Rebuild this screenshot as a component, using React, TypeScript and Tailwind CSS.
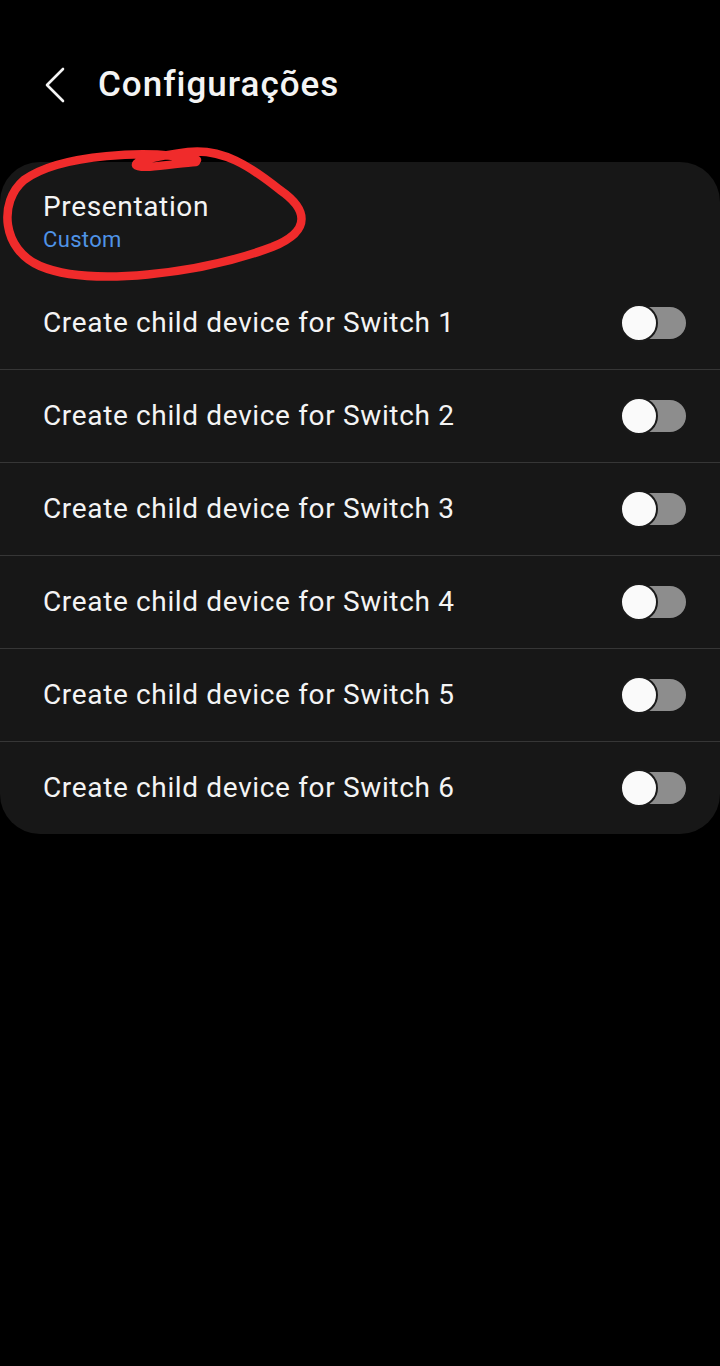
import React from "react";

function Toggle() {
  return (
    <div className="relative w-[66px] h-[38px] flex items-center">
      <div className="absolute left-[4px] right-0 h-[32px] rounded-full bg-[#8d8d8d]" />
      <div className="absolute left-0 w-[38px] h-[38px] rounded-full bg-[#fafafa] border-[2px] border-[#1a1a1a]" />
    </div>
  );
}

export default function App() {
  const rows = [1, 2, 3, 4, 5, 6];
  return (
    <div
      className="relative w-[720px] h-[1366px] bg-black text-[#f4f4f4] overflow-hidden"
      style={{ fontFamily: "Roboto, 'Noto Sans', sans-serif" }}
    >
      <div className="h-[162px] pt-[65px] flex items-start">
        <div className="flex items-center h-[40px]">
          <svg className="ml-[44px]" width="22" height="36" viewBox="0 0 22 36" fill="none">
            <path d="M19 2 L3 18 L19 34" stroke="#f4f4f4" strokeWidth="2.6" strokeLinecap="round" strokeLinejoin="round" />
          </svg>
          <span className="ml-[32px] text-[35px] leading-[40px] font-medium tracking-[1px]">Configurações</span>
        </div>
      </div>

      <div className="bg-[#171717] rounded-[40px]">
        <div className="h-[115px] pt-[28px] pl-[43px] flex flex-col">
          <span className="text-[28px] leading-[34px] tracking-[0.65px]">Presentation</span>
          <span className="mt-[3px] text-[22px] leading-[26px] tracking-[0.35px] text-[#4f93e6]">Custom</span>
        </div>
        {rows.map((n, i) => (
          <div
            key={n}
            className={
              "h-[92px] box-content flex items-center justify-between pl-[43px] pr-[34px] " +
              (i > 0 ? "border-t border-[#363636]" : "")
            }
          >
            <span className="text-[28px] leading-[34px] tracking-[0.65px]">Create child device for Switch {n}</span>
            <Toggle />
          </div>
        ))}
      </div>

      <svg className="absolute left-0 top-0 pointer-events-none" width="720" height="400" viewBox="0 0 720 400" fill="none">
        <path
          d="M197 160 C150 149, 60 154, 24 180 C-2 202, 2 250, 40 266 C90 287, 200 274, 272 247 C314 230, 306 208, 280 190 C250 166, 222 148, 188 152 C165 155, 135 160, 136 165 C140 170, 178 163, 196 162"
          stroke="#f02b2b"
          strokeWidth="8.5"
          strokeLinecap="round"
          strokeLinejoin="round"
        />
      </svg>
    </div>
  );
}
